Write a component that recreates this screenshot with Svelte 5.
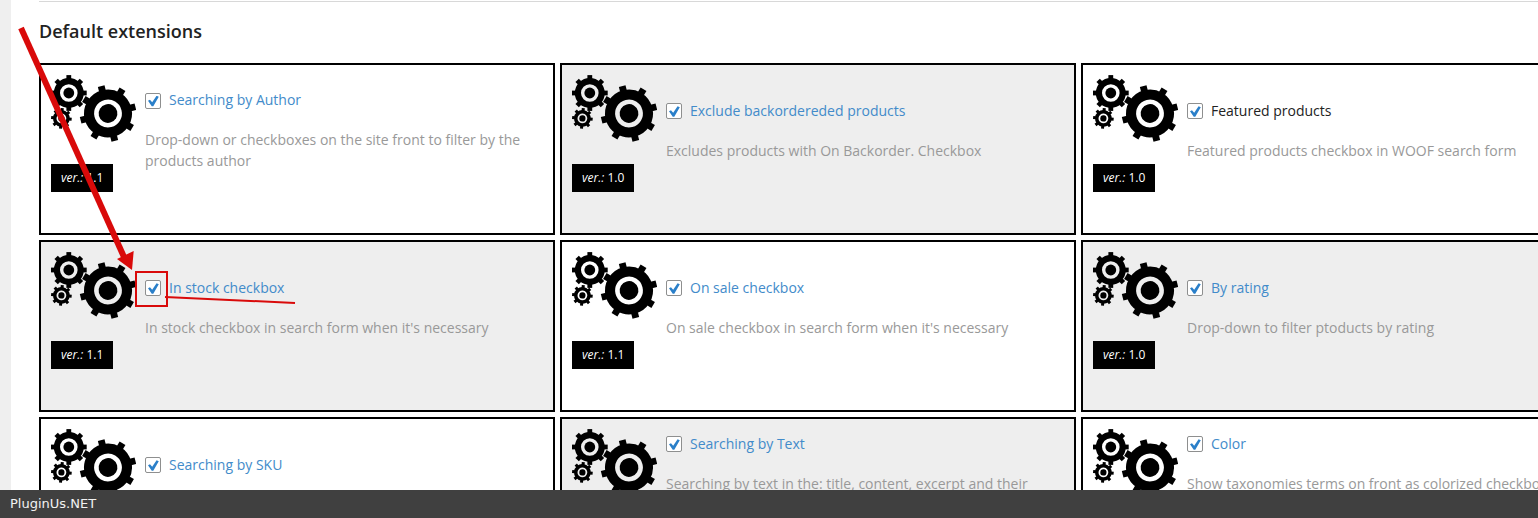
<script>
  const extensions = [
    { id: 'author', title: 'Searching by Author', link: true, ver: '1.1', text: 'Drop-down or checkboxes on the site front to filter by the products author' },
    { id: 'backorder', title: 'Exclude backordereded products', link: true, ver: '1.0', text: 'Excludes products with On Backorder. Checkbox' },
    { id: 'featured', title: 'Featured products', link: false, ver: '1.0', text: 'Featured products checkbox in WOOF search form' },
    { id: 'instock', title: 'In stock checkbox', link: true, ver: '1.1', text: "In stock checkbox in search form when it's necessary" },
    { id: 'onsales', title: 'On sale checkbox', link: true, ver: '1.1', text: "On sale checkbox in search form when it's necessary" },
    { id: 'rating', title: 'By rating', link: true, ver: '1.0', text: 'Drop-down to filter ptoducts by rating' },
    { id: 'sku', title: 'Searching by SKU', link: true, ver: '1.1', text: 'Searching by products SKU' },
    { id: 'text', title: 'Searching by Text', link: true, ver: '1.1', text: 'Searching by text in the: title, content, excerpt and their combinations. Can be used as a text field in the search form of products on the site front' },
    { id: 'color', title: 'Color', link: true, ver: '1.1', text: 'Show taxonomies terms on front as colorized checkboxes. Colors can be selected for each of the terms of a taxonomy, one by one, in the settings' }
  ];

  const teeth = [0, 45, 90, 135, 180, 225, 270, 315];

  // r: body radius, tip: tooth radius, hole / core: inner ring radii
  const gears = [
    { x: 17.8, y: 18, r: 15, tip: 17.9, hole: 8.8, core: 5.4, tooth: 4.8, turn: 0 },
    { x: 10.4, y: 43.4, r: 8.4, tip: 10.3, hole: 4.9, core: 3.1, tooth: 3, turn: 5 },
    { x: 57, y: 38.5, r: 24, tip: 28.2, hole: 13.9, core: 9.4, tooth: 6.8, turn: -14 }
  ];
</script>

<div class="page">
  <main class="content">
    <h3>Default extensions</h3>

    <ul class="extensions">
      {#each extensions as ext (ext.id)}
        <li class="extension">
          <div class="media">
            <svg class="gears" viewBox="0 0 85 68" aria-hidden="true">
              {#each gears as g}
                <g transform={`translate(${g.x} ${g.y}) rotate(${g.turn})`}>
                  <circle r={(g.r + g.hole) / 2} fill="none" stroke="#000" stroke-width={g.r - g.hole} />
                  <circle r={g.core} />
                  {#each teeth as angle}
                    <rect x={g.r - 1} y={-g.tooth / 2} width={g.tip - g.r + 1} height={g.tooth} transform={`rotate(${angle})`} />
                  {/each}
                </g>
              {/each}
            </svg>
            <span class="version"><i>ver.:</i> {ext.ver}</span>
          </div>

          <div class="info">
            <div class="title">
              <input type="checkbox" id={ext.id} aria-label={ext.title} checked />
              {#if ext.link}
                <a href={`#${ext.id}`}>{ext.title}</a>
              {:else}
                <label for={ext.id}>{ext.title}</label>
              {/if}
            </div>
            <p>{ext.text}</p>
          </div>
        </li>
      {/each}
    </ul>
  </main>

  <footer>PluginUs.NET</footer>

  <!-- Pointer to the "In stock" option -->
  <svg class="pointer" width="310" height="320" aria-hidden="true">
    <path d="M21 28 L124 257" stroke-width="6" />
    <path class="head" d="M117 259 L133.700 251 L132 270 Z" />
    <rect x="136" y="272" width="31" height="34" stroke-width="2" />
    <path d="M165 297 L295 303" stroke-width="2" />
  </svg>
</div>

<style>
  :global(body) {
    margin: 0;
  }

  .page {
    position: relative;
    display: flex;
    flex-direction: column;
    height: 100vh;
    overflow: hidden;
    background: #fff;
    color: #222;
    font-family: 'Open Sans', sans-serif;
    font-size: 14px;
    line-height: 21px;
  }

  .content {
    flex: 1;
    min-height: 0;
    overflow: hidden;
    padding: 1px 0 0 28px;
    border-left: 11px solid #efefef;
  }

  h3 {
    margin: 0;
    padding: 17px 0 20px;
    border-top: 1px solid #d8d8d8;
    font-size: 18px;
    font-weight: 600;
    line-height: 24px;
  }

  /* the last column runs past the right edge */
  .extensions {
    display: grid;
    grid-template-columns: repeat(3, 1fr);
    gap: 5px;
    margin: 0 -59px 0 0;
    padding: 0;
    list-style: none;
  }

  .extension {
    display: flex;
    align-items: flex-start;
    gap: 9px;
    box-sizing: border-box;
    height: 172px;
    padding: 10px;
    border: 2px solid #000;
    background: #fff;
  }
  .extension:nth-child(even) {
    background: #eee;
  }

  .media {
    display: flex;
    flex-direction: column;
    flex-shrink: 0;
    align-items: flex-start;
    gap: 21px;
    width: 85px;
  }

  .gears {
    display: block;
    width: 85px;
    height: 68px;
  }

  .version {
    padding: 0 10px;
    background: #000;
    color: #fff;
    font-size: 12px;
    line-height: 28px;
  }

  .info {
    display: flex;
    flex-direction: column;
    flex: 1;
    justify-content: center;
    gap: 19px;
    min-width: 0;
    height: 110px;
  }

  .title {
    display: flex;
    align-items: center;
    gap: 8px;
  }

  a {
    color: #428bca;
    text-decoration: none;
  }

  p {
    margin: 0;
    color: #999;
  }

  input {
    appearance: none;
    position: relative;
    flex-shrink: 0;
    box-sizing: border-box;
    width: 16px;
    height: 16px;
    margin: 2px 0 0;
    border: 1px solid #8e8f8f;
    border-radius: 2px;
    background: #fff;
  }
  input:checked::before {
    content: '';
    position: absolute;
    inset: 2px 1px 1px 2px;
    background: #2a7fc9;
    clip-path: polygon(0 48%, 18% 38%, 38% 62%, 78% 2%, 98% 12%, 48% 98%, 34% 98%);
  }

  footer {
    padding: 0 10px;
    background: #404040;
    color: #f2f2f2;
    font-family: 'DejaVu Sans', sans-serif;
    font-size: 13px;
    line-height: 28px;
  }

  .pointer {
    position: absolute;
    top: 0;
    left: 0;
    fill: none;
    stroke: #d90a0a;
    pointer-events: none;
  }
  .pointer .head {
    fill: #d90a0a;
    stroke: none;
  }
</style>
